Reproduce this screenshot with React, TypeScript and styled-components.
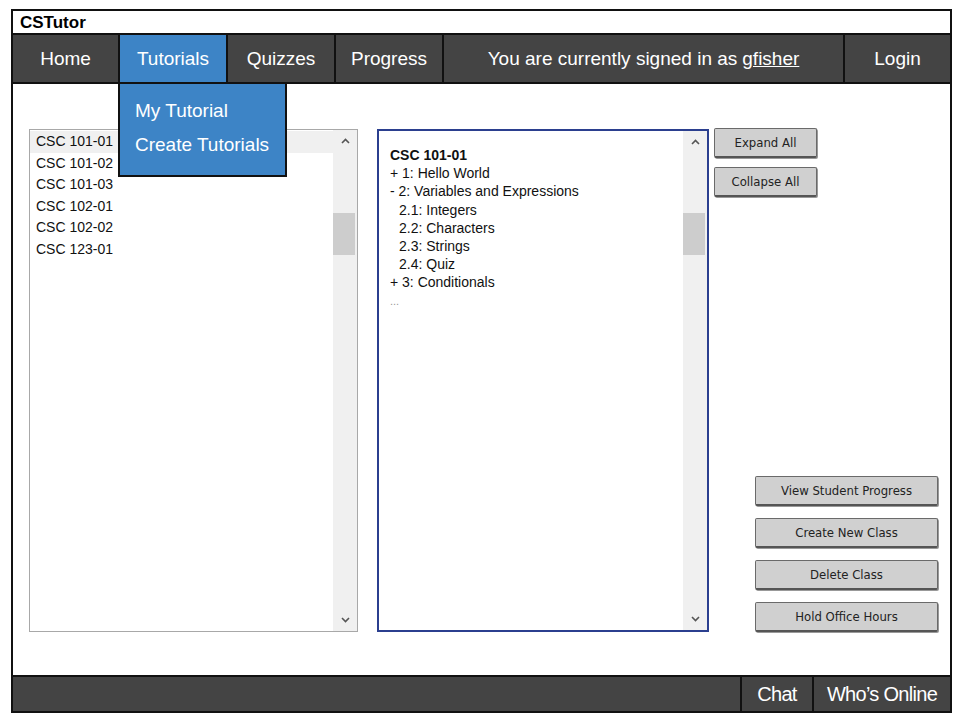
import React from 'react';
import styled, { createGlobalStyle } from 'styled-components';

const GlobalStyle = createGlobalStyle`
  body {
    margin: 0;
    background: #fff;
    font-family: "Liberation Sans", Arial, sans-serif;
  }
`;

const Frame = styled.div`
  box-sizing: border-box;
  margin: 9px 0 0 11px;
  width: 941px;
  height: 704px;
  border: 2px solid #111;
  display: flex;
  flex-direction: column;
  position: relative;
`;

const TitleBar = styled.div`
  height: 22px;
  border-bottom: 2px solid #111;
  padding-left: 7px;
  font-weight: bold;
  font-size: 17px;
  line-height: 23px;
  color: #000;
`;

const NavBar = styled.div`
  display: flex;
  height: 47px;
  background: #444;
  border-bottom: 2px solid #111;
`;

const NavCell = styled.div<{ $width: number; $active?: boolean; $last?: boolean }>`
  box-sizing: border-box;
  width: ${p => p.$width}px;
  flex: ${p => (p.$last ? '1' : 'none')};
  border-right: ${p => (p.$last ? 'none' : '2px solid #111')};
  background: ${p => (p.$active ? '#3d84c6' : '#444')};
  color: #fff;
  font-size: 19px;
  display: flex;
  align-items: center;
  justify-content: center;
  position: relative;
`;

const UserLink = styled.span`
  text-decoration: underline;
  margin-left: 5px;
`;

const Dropdown = styled.div`
  position: absolute;
  left: 105px;
  top: 71px;
  width: 169px;
  height: 95px;
  box-sizing: border-box;
  background: #3d84c6;
  border: 2px solid #111;
  z-index: 5;
  padding: 15px 0 0 15px;
  display: flex;
  flex-direction: column;
  gap: 11px;
`;

const DropItem = styled.div`
  color: #fff;
  font-size: 19px;
  line-height: 23px;
`;

const Content = styled.div`
  flex: 1;
  display: flex;
  padding: 45px 12px 43px 16px;
`;

const ListBox = styled.div<{ $width: number; $selected?: boolean }>`
  box-sizing: border-box;
  width: ${p => p.$width}px;
  border: ${p => (p.$selected ? '2px solid #2b3f8f' : '1px solid #a8a8a8')};
  display: flex;
  background: #fff;
`;

const ListBody = styled.div<{ $padTop: number; $padLeft: number }>`
  flex: 1;
  padding-top: ${p => p.$padTop}px;
  padding-left: ${p => p.$padLeft}px;
  color: #111;
  font-size: 14px;
`;

const ListItem = styled.div<{ $highlight?: boolean }>`
  height: 21.6px;
  line-height: 20px;
  padding-left: 6px;
  background: ${p => (p.$highlight ? '#f0f0f0' : 'transparent')};
`;

const TreeLine = styled.div<{ $bold?: boolean; $indent?: boolean; $muted?: boolean }>`
  height: 18.2px;
  line-height: 18px;
  font-weight: ${p => (p.$bold ? 'bold' : 'normal')};
  padding-left: ${p => (p.$indent ? '9px' : '0')};
  color: ${p => (p.$muted ? '#999' : '#111')};
  font-size: ${p => (p.$muted ? '11px' : '14px')};
`;

const ScrollBar = styled.div`
  width: 24px;
  background: #f0f0f0;
  display: flex;
  flex-direction: column;
  align-items: center;
  position: relative;
`;

const Thumb = styled.div<{ $top: number }>`
  position: absolute;
  top: ${p => p.$top}px;
  left: 0;
  width: 22px;
  height: 42px;
  background: #cdcdcd;
`;

const Arrow = styled.svg`
  margin: 8px 0;
`;

const Spacer = styled.div`
  flex: 1;
`;

const RightColumn = styled.div`
  flex: 1;
  display: flex;
  flex-direction: column;
  justify-content: space-between;
  margin-left: 5px;
  margin-top: -1px;
`;

const ButtonGroup = styled.div<{ $align: string; $gap: number }>`
  display: flex;
  flex-direction: column;
  align-items: ${p => p.$align};
  gap: ${p => p.$gap}px;
`;

const SketchButton = styled.div<{ $width: number }>`
  box-sizing: border-box;
  width: ${p => p.$width}px;
  height: 30px;
  background: #d0d0d0;
  border: 1px solid #6a6a6a;
  border-bottom: 2px solid #555;
  border-radius: 2px;
  box-shadow: 1px 1px 0 #999;
  font-family: "Comic Sans MS", "DejaVu Sans Condensed", "DejaVu Sans", sans-serif;
  font-size: 13px;
  color: #222;
  display: flex;
  align-items: center;
  justify-content: center;
`;

const Footer = styled.div`
  height: 34px;
  background: #444;
  border-top: 2px solid #111;
  display: flex;
  justify-content: flex-end;
`;

const FooterCell = styled.div<{ $width: number }>`
  box-sizing: border-box;
  width: ${p => p.$width}px;
  border-left: 2px solid #111;
  color: #fff;
  font-family: "Liberation Sans Narrow", "Liberation Sans", Arial, sans-serif;
  font-size: 20px;
  letter-spacing: -0.7px;
  display: flex;
  align-items: center;
  justify-content: center;
`;

const Chevron = ({ up }: { up?: boolean }) => (
  <Arrow width="9" height="6" viewBox="0 0 9 6">
    <path
      d={up ? 'M1 5 L4.5 1.5 L8 5' : 'M1 1 L4.5 4.5 L8 1'}
      fill="none"
      stroke="#555"
      strokeWidth="1.6"
    />
  </Arrow>
);

const Scroll = ({ thumbTop }: { thumbTop: number }) => (
  <ScrollBar>
    <Chevron up />
    <Thumb $top={thumbTop} />
    <Spacer />
    <Chevron />
  </ScrollBar>
);

const courses = ['CSC 101-01', 'CSC 101-02', 'CSC 101-03', 'CSC 102-01', 'CSC 102-02', 'CSC 123-01'];

const tree = [
  { text: '+ 1: Hello World' },
  { text: '- 2: Variables and Expressions' },
  { text: '2.1: Integers', indent: true },
  { text: '2.2: Characters', indent: true },
  { text: '2.3: Strings', indent: true },
  { text: '2.4: Quiz', indent: true },
  { text: '+ 3: Conditionals' },
];

const App: React.FC = () => (
  <>
    <GlobalStyle />
    <Frame>
      <TitleBar>CSTutor</TitleBar>
      <NavBar>
        <NavCell $width={107}>Home</NavCell>
        <NavCell $width={108} $active>Tutorials</NavCell>
        <NavCell $width={108}>Quizzes</NavCell>
        <NavCell $width={108}>Progress</NavCell>
        <NavCell $width={401}>
          You are currently signed in as<UserLink>gfisher</UserLink>
        </NavCell>
        <NavCell $width={106} $last>Login</NavCell>
      </NavBar>
      <Dropdown>
        <DropItem>My Tutorial</DropItem>
        <DropItem>Create Tutorials</DropItem>
      </Dropdown>
      <Content>
        <ListBox $width={329}>
          <ListBody $padTop={1} $padLeft={0}>
            {courses.map((c, i) => (
              <ListItem key={c} $highlight={i === 0}>{c}</ListItem>
            ))}
          </ListBody>
          <Scroll thumbTop={83} />
        </ListBox>
        <ListBox $width={332} $selected style={{ marginLeft: 19 }}>
          <ListBody $padTop={15} $padLeft={11}>
            <TreeLine $bold>CSC 101-01</TreeLine>
            {tree.map(t => (
              <TreeLine key={t.text} $indent={t.indent}>{t.text}</TreeLine>
            ))}
            <TreeLine $muted>...</TreeLine>
          </ListBody>
          <Scroll thumbTop={82} />
        </ListBox>
        <RightColumn>
          <ButtonGroup $align="flex-start" $gap={9}>
            <SketchButton $width={103}>Expand All</SketchButton>
            <SketchButton $width={103}>Collapse All</SketchButton>
          </ButtonGroup>
          <ButtonGroup $align="flex-end" $gap={12}>
            <SketchButton $width={183}>View Student Progress</SketchButton>
            <SketchButton $width={183}>Create New Class</SketchButton>
            <SketchButton $width={183}>Delete Class</SketchButton>
            <SketchButton $width={183}>Hold Office Hours</SketchButton>
          </ButtonGroup>
        </RightColumn>
      </Content>
      <Footer>
        <FooterCell $width={72}>Chat</FooterCell>
        <FooterCell $width={138}>Who’s Online</FooterCell>
      </Footer>
    </Frame>
  </>
);

export default App;
